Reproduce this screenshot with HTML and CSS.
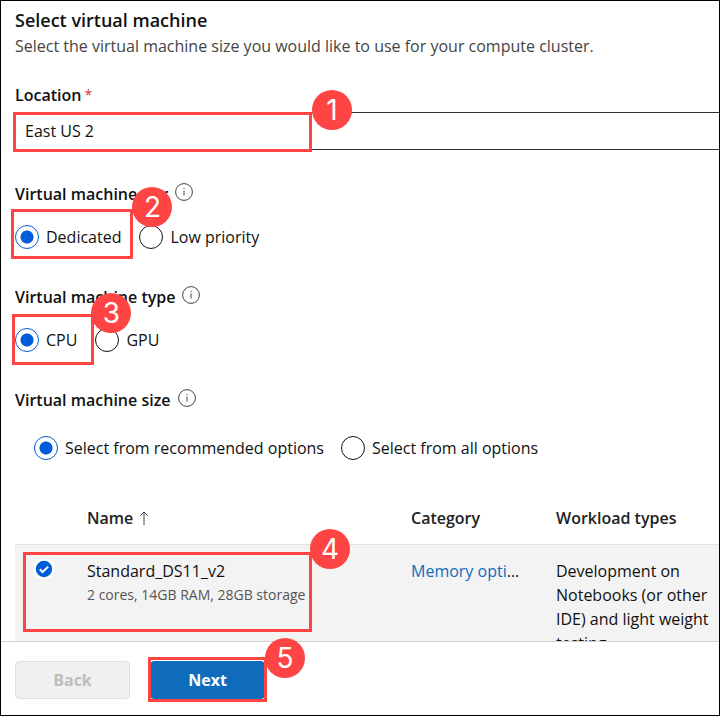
FILE: index.html
```html
<!DOCTYPE html>
<html lang="en">
<head>
<meta charset="utf-8">
<title>Select virtual machine</title>
<link rel="stylesheet" href="styles.css">
</head>
<body>
<main class="panel">
  <h1 class="title">Select virtual machine</h1>
  <p class="subtitle">Select the virtual machine size you would like to use for your compute cluster.</p>

  <div class="field">
    <label class="label" for="location">Location <span class="required">*</span></label>
    <div class="callout">
      <select class="select" id="location"><option>East US 2</option></select>
      <span class="frame frame-location"><span class="badge">1</span></span>
    </div>
  </div>

  <fieldset class="group">
    <legend class="label">Virtual machine tier
      <svg class="info" viewBox="0 0 18 18"><circle cx="9" cy="9" r="8.4"/><path d="M9 7.5v5M9 5v1.2"/></svg>
    </legend>
    <div class="options">
      <div class="callout">
        <label class="option"><input type="radio" name="tier" checked>Dedicated</label>
        <span class="frame frame-tier"><span class="badge">2</span></span>
      </div>
      <label class="option"><input type="radio" name="tier">Low priority</label>
    </div>
  </fieldset>

  <fieldset class="group">
    <legend class="label">Virtual machine type
      <svg class="info" viewBox="0 0 18 18"><circle cx="9" cy="9" r="8.4"/><path d="M9 7.5v5M9 5v1.2"/></svg>
    </legend>
    <div class="options">
      <div class="callout">
        <label class="option"><input type="radio" name="type" checked>CPU</label>
        <span class="frame frame-type"><span class="badge">3</span></span>
      </div>
      <label class="option"><input type="radio" name="type">GPU</label>
    </div>
  </fieldset>

  <fieldset class="group">
    <legend class="label">Virtual machine size
      <svg class="info" viewBox="0 0 18 18"><circle cx="9" cy="9" r="8.4"/><path d="M9 7.5v5M9 5v1.2"/></svg>
    </legend>
    <div class="options options-size">
      <label class="option"><input type="radio" name="size" checked>Select from recommended options</label>
      <label class="option"><input type="radio" name="size">Select from all options</label>
    </div>
  </fieldset>

  <table class="sizes">
    <colgroup><col class="col-check"><col class="col-name"><col class="col-category"><col></colgroup>
    <thead>
      <tr>
        <td></td>
        <th scope="col">Name
          <svg class="sort" viewBox="0 0 10 14"><path d="M5 14V1M1.5 4.5 5 1l3.5 3.5"/></svg>
        </th>
        <th scope="col">Category</th>
        <th scope="col">Workload types</th>
      </tr>
    </thead>
    <tbody>
      <tr>
        <td class="callout">
          <svg class="check" viewBox="0 0 20 20"><circle cx="10" cy="10" r="10" fill="#fff"/><circle cx="10" cy="10" r="9.2" fill="#015cda"/><path d="m5.8 10.2 2.8 2.8 5.6-5.4"/></svg>
          <span class="frame frame-size"><span class="badge">4</span></span>
        </td>
        <td>Standard_DS11_v2<div class="specs">2 cores, 14GB RAM, 28GB storage</div></td>
        <td class="category"><a href="#">Memory optimized</a></td>
        <td>Development on Notebooks (or other IDE) and light weight testing</td>
      </tr>
    </tbody>
  </table>
</main>
<footer class="footer">
  <button class="button" type="button" disabled>Back</button>
  <div class="callout">
    <button class="button primary" type="button">Next</button>
    <span class="frame frame-next"><span class="badge">5</span></span>
  </div>
</footer>
</body>
</html>
```
FILE: styles.css
```css
* { box-sizing: border-box; }

body {
  display: flex;
  flex-direction: column;
  height: 100vh;
  margin: 0;
  overflow: hidden;
  border: 1px solid #000;
  background: #fff;
  color: #111;
  font: 16px/24px "Open Sans", "Noto Sans", sans-serif;
}

.panel {
  flex: 1;
  min-height: 0;
  overflow: hidden;
  padding: 7px 0 0 14px;
}

.title {
  margin: 0;
  font-size: 18px;
  font-weight: 600;
  line-height: 24px;
}

.subtitle {
  margin: 2px 0 25px;
  color: #444;
}

.label {
  display: flex;
  align-items: center;
  padding: 0;
  font-weight: 600;
}

.required {
  margin-left: 3px;
  color: #d13438;
  font-size: 14px;
  font-weight: 400;
}

.callout { position: relative; }

.select {
  display: block;
  width: 100%;
  height: 38px;
  margin-top: 5px;
  padding: 0 9px;
  appearance: none;
  border: 1px solid #333;
  border-right: 0;
  border-radius: 2px 0 0 2px;
  background: #fff;
  color: #111;
  font: inherit;
}

.group {
  min-width: 0;
  margin: 36px 0 0;
  padding: 0;
  border: 0;
}

.field + .group { margin-top: 32px; }

.info {
  width: 18px;
  height: 18px;
  margin: 0 0 4px 7px;
  fill: none;
  stroke: #444;
}

.options {
  display: flex;
  gap: 18px;
  margin-top: 19px;
}

.options-size {
  gap: 17px;
  margin: 24px 0 0 19px;
}

.option {
  display: flex;
  align-items: center;
  gap: 7px;
}

.option input {
  width: 24px;
  height: 24px;
  margin: 0;
  appearance: none;
  border: 1px solid #111;
  border-radius: 50%;
  background: #fff;
}

.option input:checked {
  border-color: #015cda;
  background: radial-gradient(circle, #015cda 6px, #fff 7px);
}

.sizes {
  width: 100%;
  margin-top: 32px;
  table-layout: fixed;
  border-collapse: collapse;
}

.col-check { width: 72px; }
.col-name { width: 324px; }
.col-category { width: 145px; }

.sizes td,
.sizes th {
  padding: 0;
  text-align: left;
  vertical-align: top;
}

.sizes th {
  height: 52px;
  color: #222;
  font-weight: 600;
  vertical-align: middle;
}

.sort {
  width: 10px;
  height: 14px;
  margin-left: 2px;
  vertical-align: -1px;
  fill: none;
  stroke: #444;
}

.sizes tbody tr {
  border-top: 1px solid #e1e1e1;
  background: #f3f3f3;
}

.sizes tbody td { padding: 14px 0; }

.check {
  display: block;
  width: 20px;
  height: 20px;
  margin-left: 19px;
  fill: none;
  stroke: #fff;
  stroke-width: 2;
}

.specs {
  color: #555;
  font-size: 14px;
  line-height: 24px;
}

.sizes .category {
  overflow: hidden;
  padding-right: 32px;
  text-overflow: ellipsis;
  white-space: nowrap;
}

.category a {
  color: #0f6cbd;
  text-decoration: none;
}

.footer {
  display: flex;
  gap: 20px;
  padding: 19px 14px 16px;
  border-top: 1px solid #d1d1d1;
}

.button {
  display: block;
  width: 115px;
  height: 38px;
  padding: 0;
  border: 1px solid #e0e0e0;
  border-radius: 4px;
  background: #f0f0f0;
  color: #bdbdbd;
  font: inherit;
  font-weight: 700;
}

.primary {
  border-color: #0f6cbd;
  background: #0f6cbd;
  color: #fff;
}

/* Numbered step markers, drawn over the control they belong to */
.frame {
  position: absolute;
  z-index: 1;
  border: 3px solid #ff4444;
  pointer-events: none;
}

.badge {
  position: absolute;
  right: -43px;
  width: 40px;
  height: 40px;
  border-radius: 50%;
  background: #ff4444;
  color: #fff;
  font: 28px/40px Inter, sans-serif;
  text-align: center;
}

.frame-location { top: 0; left: -2px; width: 299px; height: 40px; }
.frame-location .badge { top: -25px; }

.frame-tier { inset: -16px -12px -10px -4px; }
.frame-tier .badge { top: -25px; right: -42px; }

.frame-type { inset: -14px -17px -13px -3px; }
.frame-type .badge { top: -24px; right: -40px; }

.frame-size { top: 7px; left: 8px; width: 289px; height: 80px; }
.frame-size .badge { top: -26px; right: -41px; }

.frame-next { inset: -4px -2px -3px -2px; }
.frame-next .badge { top: -22px; right: -41px; }
```
